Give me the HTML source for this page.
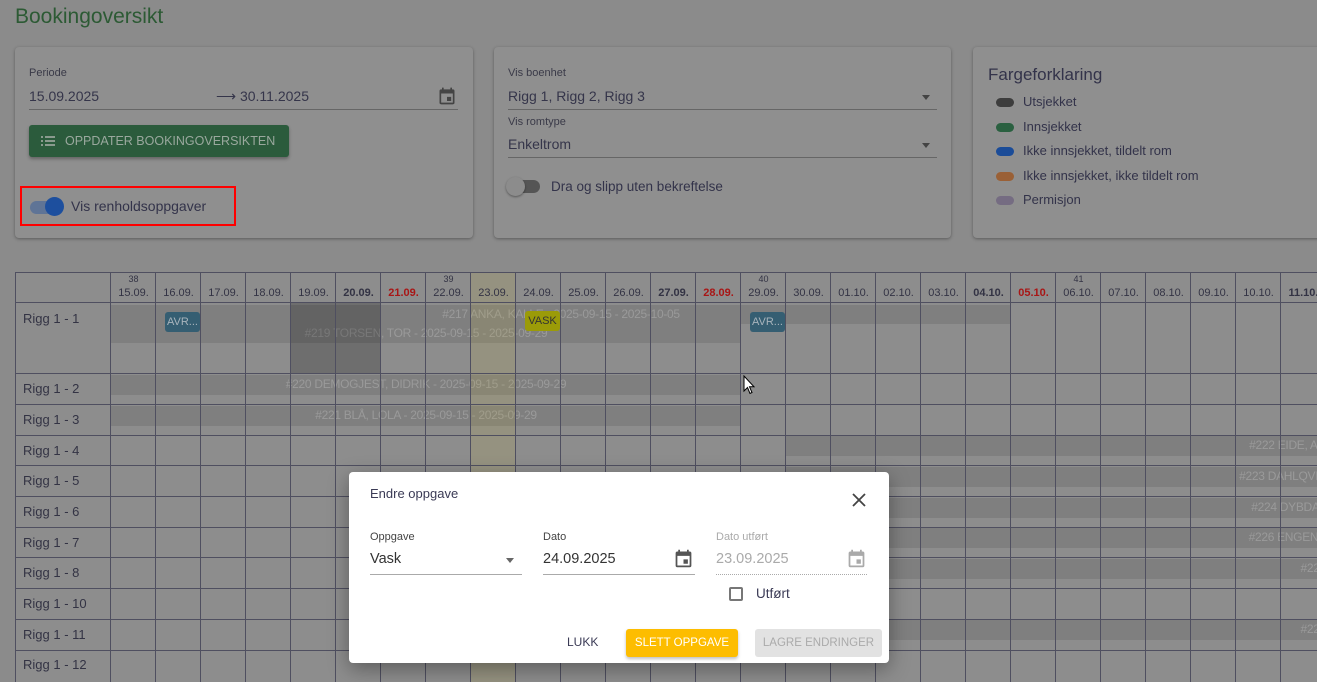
<!DOCTYPE html>
<html><head><meta charset="utf-8"><style>
*{box-sizing:border-box;margin:0;padding:0}
body{width:1317px;height:675px;overflow:hidden;background:#8b8b8b;font-family:"Liberation Sans",sans-serif;color:#3b3b4a;position:relative}
.a{position:absolute}
.card{position:absolute;background:#8f8f8f;border-radius:4px;box-shadow:0 1px 3px rgba(0,0,0,.35)}
.lbl{font-size:11px;color:#3a3a48}
.val{font-size:14px;color:#35354a}
.ul{height:1px;background:#666}
.vl{position:absolute;top:272px;width:1px;height:410px;background:#4f4f60}
.hl{position:absolute;left:15px;width:1310px;height:1px;background:#4f4f60}
.dh{position:absolute;top:287px;width:45px;text-align:center;font-size:11px;color:#333344}
.wk{position:absolute;top:274px;width:45px;text-align:center;font-size:9px;color:#333344}
.b{font-weight:bold}.r{color:#a81616;font-weight:bold}
.rl{position:absolute;left:23px;font-size:13px;color:#333344}
.bar{position:absolute;background:#7f7f7f;color:#9a9a9a;font-size:12px;text-align:center;line-height:19px;white-space:nowrap;overflow:hidden;letter-spacing:-.3px}
.sw{display:inline-block;width:18px;height:9px;border-radius:5px;margin-right:9px;vertical-align:middle}
.lg{font-size:13px;height:24.5px;color:#33334a}
</style></head><body>
<div class="a" style="left:15px;top:5px;font-size:21px;color:#2c5a34">Bookingoversikt</div>

<div class="card" style="left:15px;top:47px;width:458px;height:191px"></div>
<div class="a lbl" style="left:29px;top:67px">Periode</div>
<div class="a val" style="left:29px;top:88px">15.09.2025</div>
<div class="a val" style="left:216px;top:88px">⟶ 30.11.2025</div>
<svg class="a" style="left:437px;top:86px" width="20" height="20" viewBox="0 0 24 24"><path fill="#444" d="M19 4h-1V2h-2v2H8V2H6v2H5a2 2 0 0 0-2 2v14a2 2 0 0 0 2 2h14a2 2 0 0 0 2-2V6a2 2 0 0 0-2-2zm0 16H5V9h14zm-7-7h5v5h-5z"/></svg>
<div class="a ul" style="left:29px;top:109px;width:429px"></div>
<div class="a" style="left:29px;top:125px;width:260px;height:32px;background:#2b5b3c;border-radius:3px;box-shadow:0 2px 3px rgba(0,0,0,.3);color:#9aa89e;font-size:12.5px;line-height:32px;padding-left:36px">OPPDATER BOOKINGOVERSIKTEN</div>
<svg class="a" style="left:41px;top:134px" width="16" height="14" viewBox="0 0 16 14"><g fill="#8a9a8e"><rect x="0" y="2" width="2" height="2"/><rect x="4" y="2" width="10" height="2"/><rect x="0" y="6" width="2" height="2"/><rect x="4" y="6" width="10" height="2"/><rect x="0" y="10" width="2" height="2"/><rect x="4" y="10" width="10" height="2"/></g></svg>
<div class="a" style="left:20px;top:186px;width:216px;height:40px;border:2px solid #f00"></div>
<div class="a" style="left:30px;top:201px;width:30px;height:13px;border-radius:7px;background:#5f7496"></div>
<div class="a" style="left:45px;top:197px;width:19px;height:19px;border-radius:50%;background:#1d4f9e"></div>
<div class="a" style="left:71px;top:198px;font-size:14px;color:#33334a">Vis renholdsoppgaver</div>

<div class="card" style="left:494px;top:47px;width:457px;height:191px"></div>
<div class="a lbl" style="left:508px;top:67px">Vis boenhet</div>
<div class="a val" style="left:508px;top:88px">Rigg 1, Rigg 2, Rigg 3</div>
<div class="a" style="left:922px;top:95px;border:4px solid transparent;border-top:5px solid #444"></div>
<div class="a ul" style="left:508px;top:109px;width:429px"></div>
<div class="a lbl" style="left:508px;top:116px">Vis romtype</div>
<div class="a val" style="left:508px;top:136px">Enkeltrom</div>
<div class="a" style="left:922px;top:143px;border:4px solid transparent;border-top:5px solid #444"></div>
<div class="a ul" style="left:508px;top:157px;width:429px"></div>
<div class="a" style="left:510px;top:180px;width:30px;height:13px;border-radius:7px;background:#555"></div>
<div class="a" style="left:506px;top:177px;width:19px;height:19px;border-radius:50%;background:#8c8c8c;box-shadow:0 1px 2px rgba(0,0,0,.4)"></div>
<div class="a" style="left:551px;top:179px;font-size:13.5px;color:#33334a">Dra og slipp uten bekreftelse</div>

<div class="card" style="left:973px;top:47px;width:360px;height:191px"></div>
<div class="a" style="left:988px;top:65px;font-size:17px;color:#33334a">Fargeforklaring</div>
<div class="a" style="left:996px;top:94px">
<div class="lg"><span class="sw" style="background:#3d3d3d"></span>Utsjekket</div>
<div class="lg"><span class="sw" style="background:#2a6040"></span>Innsjekket</div>
<div class="lg"><span class="sw" style="background:#1b4c98"></span>Ikke innsjekket, tildelt rom</div>
<div class="lg"><span class="sw" style="background:#9a6036"></span>Ikke innsjekket, ikke tildelt rom</div>
<div class="lg"><span class="sw" style="background:#756c82"></span>Permisjon</div>
</div>

<!-- grid -->
<div class="a" style="left:15px;top:272px;width:1310px;height:410px;background:#8d8d8d"></div>
<div class="bar" style="left:111px;top:305px;width:900px;height:19px">#217 ANKA, KALLE - 2025-09-15 - 2025-10-05</div>
<div class="bar" style="left:111px;top:324px;width:630px;height:19px">#219 TORSEN, TOR - 2025-09-15 - 2025-09-29</div>
<div class="bar" style="left:111px;top:375px;width:630px;height:20px">#220 DEMOGJEST, DIDRIK - 2025-09-15 - 2025-09-29</div>
<div class="bar" style="left:111px;top:406px;width:630px;height:20px">#221 BLÅ, LOLA - 2025-09-15 - 2025-09-29</div>
<div class="bar" style="left:786px;top:436px;width:540px;height:20px;text-align:right">#222 EIDE, AR</div>
<div class="bar" style="left:786px;top:467px;width:540px;height:20px;text-align:right">#223 DAHLQVIS</div>
<div class="bar" style="left:786px;top:498px;width:540px;height:20px;text-align:right">#224 DYBDAL</div>
<div class="bar" style="left:786px;top:528px;width:540px;height:20px;text-align:right">#226 ENGENE</div>
<div class="bar" style="left:786px;top:559px;width:540px;height:20px;text-align:right">#227</div>
<div class="bar" style="left:786px;top:620px;width:540px;height:20px;text-align:right">#228</div>
<div class="a" style="left:471px;top:272px;width:45px;height:410px;background:rgba(190,175,60,.16)"></div>
<div class="a" style="left:291px;top:303px;width:90px;height:70px;background:rgba(0,0,0,.22)"></div>

<div class="vl" style="left:15px"></div>
<div class="vl" style="left:110px"></div>
<div class="a" style="left:111px;top:272px;width:1215px;height:410px;background:linear-gradient(to right,transparent 44px,#4f4f60 44px) 0 0/45px 100%"></div>
<div class="hl" style="top:272px"></div><div class="hl" style="top:302px"></div><div class="hl" style="top:373px"></div><div class="hl" style="top:404px"></div><div class="hl" style="top:435px"></div><div class="hl" style="top:465px"></div><div class="hl" style="top:496px"></div><div class="hl" style="top:527px"></div><div class="hl" style="top:557px"></div><div class="hl" style="top:588px"></div><div class="hl" style="top:619px"></div><div class="hl" style="top:650px"></div>

<div class="wk" style="left:111px">38</div><div class="wk" style="left:426px">39</div><div class="wk" style="left:741px">40</div><div class="wk" style="left:1056px">41</div>
<div class="dh" style="left:111px">15.09.</div><div class="dh" style="left:156px">16.09.</div><div class="dh" style="left:201px">17.09.</div><div class="dh" style="left:246px">18.09.</div><div class="dh" style="left:291px">19.09.</div><div class="dh b" style="left:336px">20.09.</div><div class="dh r" style="left:381px">21.09.</div><div class="dh" style="left:426px">22.09.</div><div class="dh" style="left:471px">23.09.</div><div class="dh" style="left:516px">24.09.</div><div class="dh" style="left:561px">25.09.</div><div class="dh" style="left:606px">26.09.</div><div class="dh b" style="left:651px">27.09.</div><div class="dh r" style="left:696px">28.09.</div><div class="dh" style="left:741px">29.09.</div><div class="dh" style="left:786px">30.09.</div><div class="dh" style="left:831px">01.10.</div><div class="dh" style="left:876px">02.10.</div><div class="dh" style="left:921px">03.10.</div><div class="dh b" style="left:966px">04.10.</div><div class="dh r" style="left:1011px">05.10.</div><div class="dh" style="left:1056px">06.10.</div><div class="dh" style="left:1101px">07.10.</div><div class="dh" style="left:1146px">08.10.</div><div class="dh" style="left:1191px">09.10.</div><div class="dh" style="left:1236px">10.10.</div><div class="dh b" style="left:1281px">11.10.</div>

<div class="rl" style="top:311px">Rigg 1 - 1</div><div class="rl" style="top:381px">Rigg 1 - 2</div><div class="rl" style="top:412px">Rigg 1 - 3</div><div class="rl" style="top:443px">Rigg 1 - 4</div><div class="rl" style="top:473px">Rigg 1 - 5</div><div class="rl" style="top:504px">Rigg 1 - 6</div><div class="rl" style="top:535px">Rigg 1 - 7</div><div class="rl" style="top:565px">Rigg 1 - 8</div><div class="rl" style="top:596px">Rigg 1 - 10</div><div class="rl" style="top:627px">Rigg 1 - 11</div><div class="rl" style="top:657px">Rigg 1 - 12</div>

<div class="a" style="left:165px;top:312px;width:35px;height:20px;background:#355e72;border-radius:3px;color:#a8b4bc;font-size:11px;line-height:20px;text-align:center">AVR...</div>
<div class="a" style="left:750px;top:312px;width:35px;height:20px;background:#355e72;border-radius:3px;color:#a8b4bc;font-size:11px;line-height:20px;text-align:center">AVR...</div>
<div class="a" style="left:525px;top:311px;width:35px;height:20px;background:#9b9b08;border-radius:3px;color:#333;font-size:11px;line-height:20px;text-align:center">VASK</div>

<!-- modal -->
<div class="a" style="left:349px;top:472px;width:540px;height:191px;background:#fff;border-radius:4px;box-shadow:0 6px 20px rgba(0,0,0,.35)"></div>
<div class="a" style="left:370px;top:486px;font-size:13px;color:#3a3a55">Endre oppgave</div>
<svg class="a" style="left:851px;top:492px" width="16" height="16" viewBox="0 0 16 16"><path d="M2 2L14 14M14 2L2 14" stroke="#444" stroke-width="1.8"/></svg>
<div class="a" style="left:370px;top:531px;font-size:11px;color:#444">Oppgave</div>
<div class="a" style="left:370px;top:551px;font-size:14.5px;color:#333">Vask</div>
<div class="a" style="left:506px;top:558px;border:4px solid transparent;border-top:5px solid #666"></div>
<div class="a" style="left:370px;top:574px;width:152px;height:1px;background:#aaa"></div>
<div class="a" style="left:543px;top:531px;font-size:11px;color:#444">Dato</div>
<div class="a" style="left:543px;top:551px;font-size:14.5px;color:#333">24.09.2025</div>
<svg class="a" style="left:673px;top:548px" width="21" height="21" viewBox="0 0 24 24"><path fill="#555" d="M19 4h-1V2h-2v2H8V2H6v2H5a2 2 0 0 0-2 2v14a2 2 0 0 0 2 2h14a2 2 0 0 0 2-2V6a2 2 0 0 0-2-2zm0 16H5V9h14zm-7-7h5v5h-5z"/></svg>
<div class="a" style="left:543px;top:574px;width:152px;height:1px;background:#aaa"></div>
<div class="a" style="left:716px;top:531px;font-size:11px;color:#aaa">Dato utført</div>
<div class="a" style="left:716px;top:551px;font-size:14.5px;color:#aaa">23.09.2025</div>
<svg class="a" style="left:846px;top:548px" width="21" height="21" viewBox="0 0 24 24"><path fill="#aaa" d="M19 4h-1V2h-2v2H8V2H6v2H5a2 2 0 0 0-2 2v14a2 2 0 0 0 2 2h14a2 2 0 0 0 2-2V6a2 2 0 0 0-2-2zm0 16H5V9h14zm-7-7h5v5h-5z"/></svg>
<div class="a" style="left:716px;top:574px;width:151px;border-top:1px dotted #aaa"></div>
<div class="a" style="left:729px;top:587px;width:14px;height:14px;border:2px solid #777;border-radius:2px"></div>
<div class="a" style="left:756px;top:586px;font-size:13.5px;color:#3a3a55">Utført</div>
<div class="a" style="left:567px;top:635px;font-size:12px;color:#3a3a55">LUKK</div>
<div class="a" style="left:626px;top:629px;width:112px;height:28px;background:#fdbd00;border-radius:3px;box-shadow:0 2px 3px rgba(0,0,0,.25);color:#fff;font-size:11.5px;line-height:28px;text-align:center">SLETT OPPGAVE</div>
<div class="a" style="left:755px;top:629px;width:127px;height:28px;background:#e2e2e2;border-radius:3px;color:#aaa;font-size:11.5px;line-height:28px;text-align:center">LAGRE ENDRINGER</div>

<svg class="a" style="left:743px;top:375px" width="12" height="20" viewBox="0 0 12 20"><path d="M1 1V16L4.5 12.5L7 18.5L9 17.5L6.5 11.8H11Z" fill="#fff" stroke="#000" stroke-width="1"/></svg>
</body></html>
